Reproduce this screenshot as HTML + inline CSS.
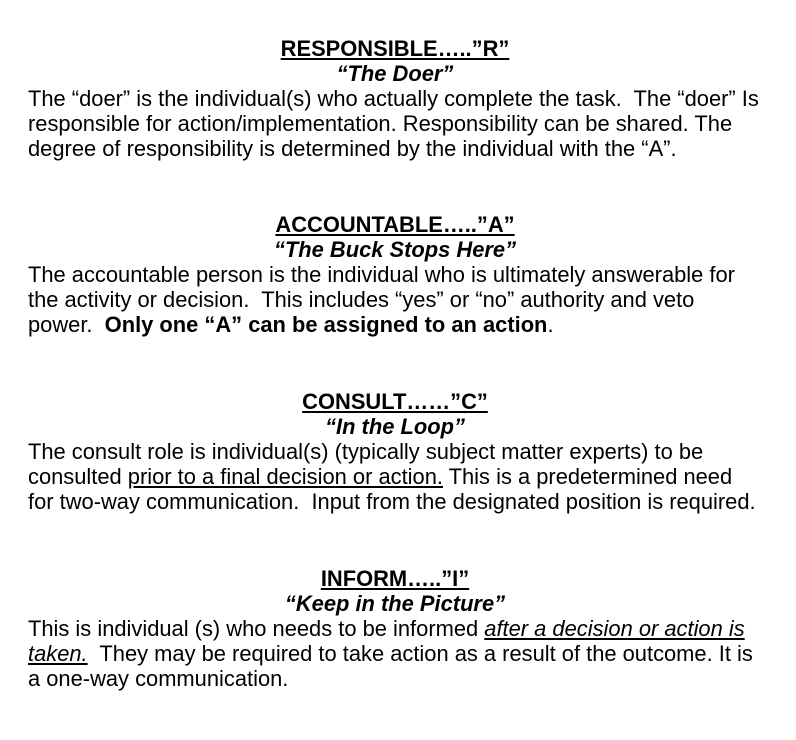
<!DOCTYPE html>
<html><head><meta charset="utf-8"><style>
body{margin:0;background:#fff;width:796px;height:740px;position:relative;font-family:"Liberation Sans",Arial,sans-serif;color:#000;font-size:21.9px;}
.b{position:absolute;left:28px;width:768px;line-height:25px;white-space:nowrap;}
.h{text-align:center;font-weight:bold;width:734px;}
.h u{text-decoration:underline;}
.s{text-align:center;font-weight:bold;font-style:italic;width:734px;}
</style></head><body>
<div class="b" style="top:36px">
<div class="h"><u>RESPONSIBLE…..”R”</u></div>
<div class="s">“The Doer”</div>
<div>The “doer” is the individual(s) who actually complete the task.&nbsp; The “doer” Is<br>responsible for action/implementation. Responsibility can be shared. The<br>degree of responsibility is determined by the individual with the “A”.</div>
</div>
<div class="b" style="top:212px">
<div class="h"><u>ACCOUNTABLE…..”A”</u></div>
<div class="s">“The Buck Stops Here”</div>
<div>The accountable person is the individual who is ultimately answerable for<br>the activity or decision.&nbsp; This includes “yes” or “no” authority and veto<br>power.&nbsp; <b>Only one “A” can be assigned to an action</b>.</div>
</div>
<div class="b" style="top:389px">
<div class="h"><u>CONSULT……”C”</u></div>
<div class="s">“In the Loop”</div>
<div>The consult role is individual(s) (typically subject matter experts) to be<br>consulted <u>prior to a final decision or action.</u> This is a predetermined need<br>for two-way communication.&nbsp; Input from the designated position is required.</div>
</div>
<div class="b" style="top:566px">
<div class="h"><u>INFORM…..”I”</u></div>
<div class="s">“Keep in the Picture”</div>
<div>This is individual (s) who needs to be informed <i><u>after a decision or action is</u></i><br><i><u>taken.</u></i>&nbsp; They may be required to take action as a result of the outcome. It is<br>a one-way communication.</div>
</div>
</body></html>
